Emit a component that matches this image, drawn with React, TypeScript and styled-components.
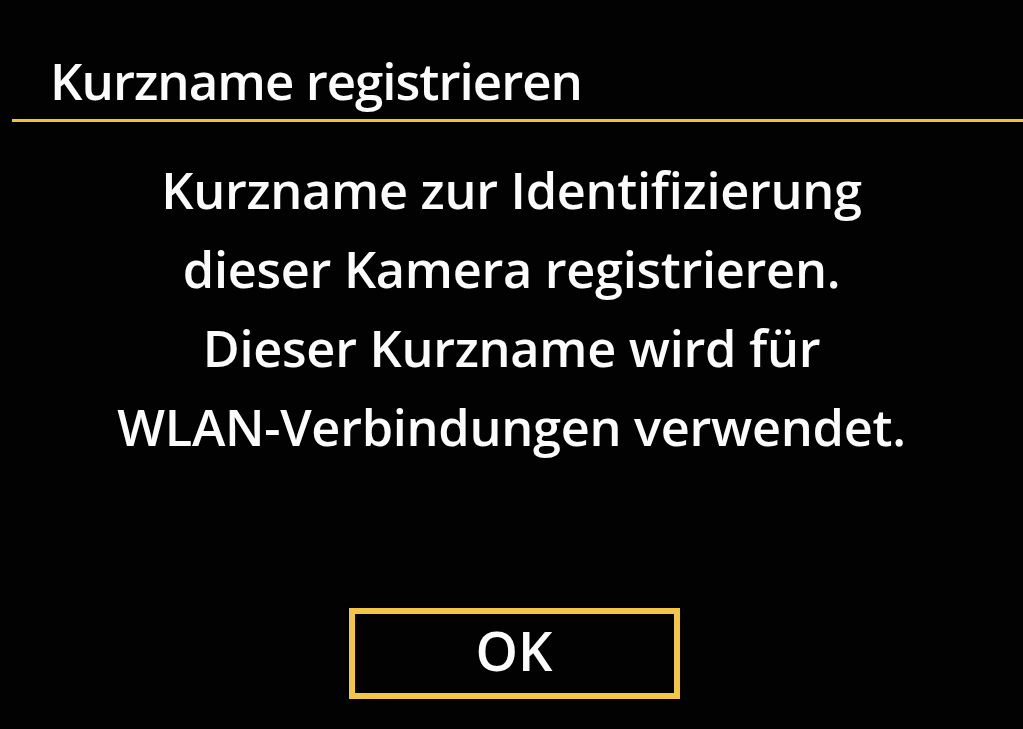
import React from "react";
import styled, { createGlobalStyle } from "styled-components";

const Global = createGlobalStyle`
  html, body { margin: 0; padding: 0; background: #000; }
  body { width: 1023px; height: 729px; overflow: hidden; }
`;

const Screen = styled.div`
  width: 1023px;
  height: 729px;
  background: #020202;
  color: #fbfbfb;
  font-family: "Open Sans", "Noto Sans", sans-serif;
  font-weight: 600;
  display: flex;
  flex-direction: column;
  box-sizing: border-box;
`;

const Header = styled.div`
  margin-left: 12px;
  padding: 50px 0 0 38px;
  border-bottom: 3px solid #f2c13a;
  height: 69px;
  box-sizing: content-box;
`;

const Title = styled.h1`
  margin: 0;
  font-size: 51px;
  font-weight: 600;
  line-height: 60px;
  letter-spacing: -1px;
`;

const Message = styled.p`
  margin: 28px 0 0;
  text-align: center;
  font-size: 50.5px;
  line-height: 79px;
  letter-spacing: -0.3px;
`;

const Footer = styled.div`
  flex: 1;
  display: flex;
  justify-content: center;
  align-items: flex-end;
  padding: 0 0 30px 5px;
`;

const OkButton = styled.button`
  width: 331px;
  height: 91px;
  box-sizing: border-box;
  border: 6px solid #f3c745;
  background: transparent;
  color: #fbfbfb;
  font-family: inherit;
  font-weight: 600;
  font-size: 54px;
  line-height: 1;
  padding: 0 0 8px;
`;

export default function App() {
  return (
    <>
      <Global />
      <Screen>
        <Header>
          <Title>Kurzname registrieren</Title>
        </Header>
        <Message>
          Kurzname zur Identifizierung
          <br />
          dieser Kamera registrieren.
          <br />
          Dieser Kurzname wird für
          <br />
          WLAN-Verbindungen verwendet.
        </Message>
        <Footer>
          <OkButton>OK</OkButton>
        </Footer>
      </Screen>
    </>
  );
}
